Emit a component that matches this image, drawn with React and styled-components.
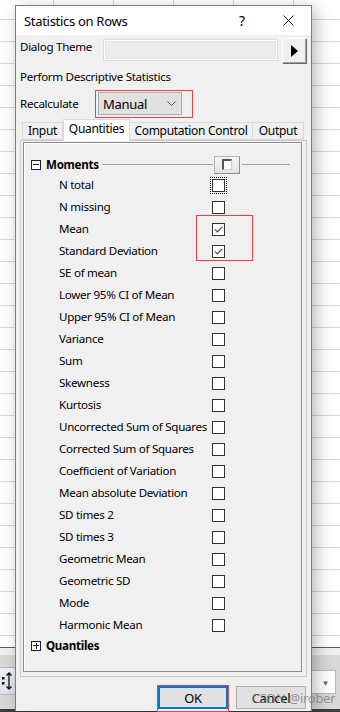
import React from 'react'
import styled, { createGlobalStyle } from 'styled-components'

const GlobalStyle = createGlobalStyle`
  html, body { margin: 0; padding: 0; }
  body {
    font-family: "Noto Sans", "Liberation Sans", sans-serif;
    font-size: 11.6px;
    letter-spacing: -0.3px;
    color: #000;
  }
`

const Page = styled.div`
  position: relative;
  width: 340px;
  height: 712px;
  overflow: hidden;
`

/* spreadsheet behind the dialog */
const Sheet = styled.div`
  display: flex;
  flex-direction: column;
  height: 100%;
`

const Grid = styled.div`
  height: 647px;
  background-color: #fff;
  background-image:
    linear-gradient(#d6d6d6 1px, transparent 1px),
    linear-gradient(90deg, #d6d6d6 1px, transparent 1px);
  background-size: 100% 22px, 60px 100%;
  background-position: 0 19px, 53px 0;
  border-bottom: 1px solid #5c5c5c;
`

const StatusStrip = styled.div`
  height: 7px;
  background: #f0f0f0;
`

const Toolbar = styled.div`
  flex: 1;
  background: #d9d9d9;
  display: flex;
  align-items: center;
  justify-content: space-between;
`

const ToolButton = styled.div`
  width: 15px;
  height: 26px;
  margin-top: -2px;
  background: linear-gradient(#eef2f7, #dde3ea);
  border: 1px solid #b5bcc5;
  border-left: none;
  border-radius: 0 3px 3px 0;
  display: flex;
  align-items: center;
  justify-content: center;
`

const ToolCombo = styled.div`
  width: 60px;
  height: 24px;
  margin-right: 4px;
  background: #fff;
  border: 1px solid #b8b8b8;
  display: flex;
  align-items: center;
  justify-content: flex-end;
  padding-right: 6px;
  box-sizing: border-box;
  color: #6a6a6a;
  font-size: 8px;
`

const BottomEdge = styled.div`
  height: 3px;
  background: #3d3d3d;
`

/* dialog window */
const Dialog = styled.div`
  position: absolute;
  left: 15px;
  top: 5px;
  width: 297px;
  height: 706px;
  box-sizing: border-box;
  border: 1px solid #7c7c7c;
  border-bottom: none;
  background: #f0f0f0;
  box-shadow: 4px 4px 16px rgba(0, 0, 0, 0.28);
  display: flex;
  flex-direction: column;
`

const TitleBar = styled.div`
  height: 29px;
  background: #fff;
  display: flex;
  align-items: center;
  padding-left: 8px;
`

const Title = styled.div`
  flex: 1;
  font-size: 13px;
`

const TitleButton = styled.div`
  width: 46px;
  height: 29px;
  display: flex;
  align-items: center;
  justify-content: center;
  font-size: 14px;
`

const Body = styled.div`
  flex: 1;
  display: flex;
  flex-direction: column;
  padding: 3px 4px 0 4px;
`

const ThemeRow = styled.div`
  display: flex;
  align-items: flex-start;
  height: 25px;
`

const Label = styled.div`
  width: ${(p) => p.$w || 'auto'};
  line-height: 18px;
  white-space: nowrap;
  flex-shrink: 0;
`

const ThemeBox = styled.div`
  width: 175px;
  height: 22px;
  margin-top: 1px;
  box-sizing: border-box;
  border: 1px solid #dcdcdc;
  box-shadow: inset 0 0 0 1px #fff, inset 0 0 0 2px #e3e3e3;
  background: #ececec;
`

const PlayButton = styled.div`
  width: 24px;
  height: 25px;
  margin-left: 4px;
  box-sizing: border-box;
  border: 1px solid #a0a0a0;
  border-top-color: #fff;
  border-left-color: #fff;
  box-shadow: 1px 1px 0 #696969;
  background: #f0f0f0;
  display: flex;
  align-items: center;
  justify-content: center;
`

const Plain = styled.div`
  margin-top: 5px;
  line-height: 18px;
`

const RecalcRow = styled.div`
  display: flex;
  align-items: center;
  height: 23px;
  margin-top: 6px;
`

const ComboWrap = styled.div`
  position: relative;
`

const Combo = styled.div`
  width: 84px;
  height: 23px;
  box-sizing: border-box;
  border: 1px solid #adadad;
  background: #e1e1e1;
  display: flex;
  align-items: center;
  justify-content: space-between;
  padding: 0 5px 0 4px;
  font-size: 13px;
`

const RedBox = styled.div`
  position: absolute;
  border: 1px solid #e8413f;
  pointer-events: none;
`

const ComboMark = styled(RedBox)`
  left: -3px;
  top: -2px;
  width: 96px;
  height: 26px;
`

const Tabs = styled.div`
  display: flex;
  align-items: flex-end;
  height: 21px;
  margin-top: 4px;
  padding-left: 2px;
  position: relative;
  z-index: 1;
`

const Tab = styled.div`
  height: ${(p) => (p.$active ? '22px' : '18px')};
  box-sizing: border-box;
  width: ${(p) => p.$w}px;
  border: 1px solid #d9d9d9;
  border-bottom: ${(p) => (p.$active ? 'none' : '1px solid #d9d9d9')};
  border-left: ${(p) => (p.$first || p.$active ? '1px solid #d9d9d9' : 'none')};
  margin-bottom: ${(p) => (p.$active ? '-1px' : '0')};
  background: ${(p) => (p.$active ? '#fff' : '#f0f0f0')};
  display: flex;
  align-items: center;
  justify-content: center;
  white-space: nowrap;
  line-height: 16px;
  font-size: 12px;
  padding-bottom: ${(p) => (p.$active ? '3px' : '0')};
`

const Panel = styled.div`
  width: 287px;
  height: 537px;
  box-sizing: border-box;
  border: 1px solid #c9c9c9;
  padding: 1px 4px 4px 2px;
  display: flex;
`

const Group = styled.div`
  position: relative;
  flex: 1;
  border: 1px solid #8c8c8c;
  box-shadow: inset 1px 1px 0 #fff;
  padding-top: 12px;
  display: flex;
  flex-direction: column;
`

const Header = styled.div`
  display: flex;
  align-items: center;
  height: 19px;
  padding: 0 11px 0 7px;
`

const Toggle = styled.div`
  width: 10px;
  height: 10px;
  box-sizing: border-box;
  border: 1px solid #222;
  background: #fff;
  position: relative;
  flex-shrink: 0;

  &::before {
    content: '';
    position: absolute;
    left: 1px;
    right: 1px;
    top: 3.5px;
    height: 1px;
    background: #222;
  }

  &::after {
    content: '';
    display: ${(p) => (p.$open ? 'none' : 'block')};
    position: absolute;
    top: 1px;
    bottom: 1px;
    left: 3.5px;
    width: 1px;
    background: #222;
  }
`

const GroupTitle = styled.div`
  font-weight: 700;
  margin-left: 5px;
  line-height: 18px;
  white-space: nowrap;
`

const Rule = styled.div`
  height: 1px;
  background: #a0a0a0;
  flex: ${(p) => (p.$fixed ? `0 0 ${p.$fixed}px` : 1)};
  margin-left: ${(p) => (p.$fixed ? '2px' : '3px')};
`

const MiniButton = styled.div`
  width: 26px;
  height: 18px;
  box-sizing: border-box;
  margin-left: 1px;
  border: 1px solid #b5b5b5;
  border-right-color: #8f8f8f;
  border-bottom-color: #8f8f8f;
  background: linear-gradient(#f4f4f4, #e4e4e4);
  display: flex;
  align-items: center;
  justify-content: center;
`

const MiniSquare = styled.div`
  width: 10px;
  height: 11px;
  background: #fff;
  border-top: 2px solid #555;
  border-left: 2px solid #555;
  border-right: 1px solid #ccc;
  border-bottom: 1px solid #ccc;
  box-sizing: border-box;
`

const Row = styled.div`
  display: grid;
  grid-template-columns: 153px 13px;
  align-items: center;
  height: 22px;
  padding-left: 35px;
`

const Check = styled.div`
  width: 13px;
  height: 13px;
  box-sizing: border-box;
  border: 1px solid #333;
  background: #fff;
  display: flex;
  align-items: center;
  justify-content: center;
  outline: ${(p) => (p.$focus ? '1px dotted #000' : 'none')};
  outline-offset: 1px;
`

const CheckMark = styled(RedBox)`
  left: 172px;
  top: 72px;
  width: 55px;
  height: 44px;
`

const FooterRow = styled.div`
  display: flex;
  justify-content: flex-end;
  gap: 8px;
  margin-top: 9px;
  padding-right: 1px;
`

const DlgButton = styled.div`
  position: relative;
  width: 70px;
  height: 23px;
  box-sizing: border-box;
  border: ${(p) => (p.$default ? '2px solid #0078d7' : '1px solid #adadad')};
  background: #e1e1e1;
  display: flex;
  align-items: center;
  justify-content: center;
  font-size: 13px;
`

const OkMark = styled(RedBox)`
  left: -3px;
  top: -3px;
  width: 70px;
  height: 25px;
`

const Watermark = styled.div`
  position: absolute;
  left: 252px;
  top: 689px;
  font-size: 13px;
  color: rgba(120, 120, 120, 0.75);
  white-space: nowrap;
  pointer-events: none;
`

const items = [
  'N total',
  'N missing',
  'Mean',
  'Standard Deviation',
  'SE of mean',
  'Lower 95% CI of Mean',
  'Upper 95% CI of Mean',
  'Variance',
  'Sum',
  'Skewness',
  'Kurtosis',
  'Uncorrected Sum of Squares',
  'Corrected Sum of Squares',
  'Coefficient of Variation',
  'Mean absolute Deviation',
  'SD times 2',
  'SD times 3',
  'Geometric Mean',
  'Geometric SD',
  'Mode',
  'Harmonic Mean',
]

const checked = ['Mean', 'Standard Deviation']

function Tick() {
  return (
    <svg width="9" height="7" viewBox="0 0 9 7">
      <path d="M0.8 3.4 L3.3 5.8 L8.3 0.9" fill="none" stroke="#5a5a5a" strokeWidth="1.3" />
    </svg>
  )
}

export default function App() {
  return (
    <Page>
      <GlobalStyle />
      <Sheet>
        <Grid />
        <StatusStrip />
        <Toolbar>
          <ToolButton>
            <svg width="11" height="20" viewBox="0 0 11 20">
              <rect x="0" y="6" width="2.5" height="2.5" fill="#111" />
              <rect x="0" y="11" width="2.5" height="2.5" fill="#111" />
              <path d="M7 2 V18 M4.5 4.5 L7 2 L9.5 4.5 M4.5 15.5 L7 18 L9.5 15.5" stroke="#111" strokeWidth="1.3" fill="none" />
            </svg>
          </ToolButton>
          <ToolCombo>▼</ToolCombo>
        </Toolbar>
        <BottomEdge />
      </Sheet>

      <Dialog>
        <TitleBar>
          <Title>Statistics on Rows</Title>
          <TitleButton>?</TitleButton>
          <TitleButton>
            <svg width="11" height="11" viewBox="0 0 11 11">
              <path d="M0.5 0.5 L10.5 10.5 M10.5 0.5 L0.5 10.5" stroke="#111" strokeWidth="1" />
            </svg>
          </TitleButton>
        </TitleBar>
        <Body>
          <ThemeRow>
            <Label $w="83px">Dialog Theme</Label>
            <ThemeBox />
            <PlayButton>
              <svg width="7" height="12" viewBox="0 0 7 12">
                <path d="M0 0 L7 6 L0 12 Z" fill="#000" />
              </svg>
            </PlayButton>
          </ThemeRow>
          <Plain>Perform Descriptive Statistics</Plain>
          <RecalcRow>
            <Label $w="78px">Recalculate</Label>
            <ComboWrap>
              <Combo>
                <span>Manual</span>
                <svg width="9" height="5" viewBox="0 0 9 5">
                  <path d="M0.5 0.5 L4.5 4.5 L8.5 0.5" fill="none" stroke="#555" strokeWidth="1" />
                </svg>
              </Combo>
              <ComboMark />
            </ComboWrap>
          </RecalcRow>
          <Tabs>
            <Tab $first $w={41}>Input</Tab>
            <Tab $active $w={67}>Quantities</Tab>
            <Tab $w={123}>Computation Control</Tab>
            <Tab $w={51}>Output</Tab>
          </Tabs>
          <Panel>
            <Group>
              <Header>
                <Toggle $open />
                <GroupTitle>Moments</GroupTitle>
                <Rule />
                <MiniButton>
                  <MiniSquare />
                </MiniButton>
                <Rule $fixed={48} />
              </Header>
              {items.map((name) => (
                <Row key={name}>
                  <Label>{name}</Label>
                  <Check $focus={name === 'N total'}>
                    {checked.includes(name) && <Tick />}
                  </Check>
                </Row>
              ))}
              <Header>
                <Toggle />
                <GroupTitle>Quantiles</GroupTitle>
              </Header>
              <CheckMark />
            </Group>
          </Panel>
          <FooterRow>
            <DlgButton $default>
              OK
              <OkMark />
            </DlgButton>
            <DlgButton>Cancel</DlgButton>
          </FooterRow>
        </Body>
      </Dialog>
      <Watermark>CSDN @irober</Watermark>
    </Page>
  )
}
